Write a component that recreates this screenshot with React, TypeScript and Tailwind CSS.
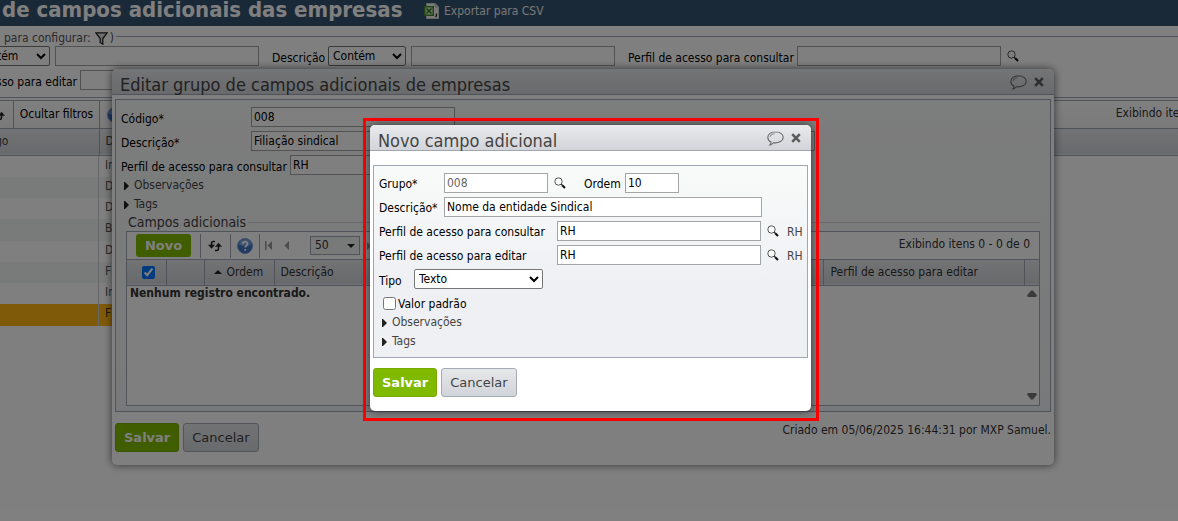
import React from "react";

const FONT = "font-['DejaVu_Sans_Condensed','DejaVu_Sans',sans-serif]";

function SearchIcon() {
  return (
    <svg width="12" height="12" viewBox="0 0 12 12" fill="none" className="shrink-0">
      <circle cx="4.500" cy="4.500" r="3.700" stroke="#555" strokeWidth="1" fill="#fafafa" />
      <path d="M7 7l1.500 1.500" stroke="#333" strokeWidth="1.200" />
      <path d="M8.200 8.200l2.800 2.800" stroke="#111" strokeWidth="2" />
    </svg>
  );
}

function BalloonIcon() {
  return (
    <svg width="17" height="15" viewBox="0 0 17 15" fill="none" stroke="#6b6b6b" strokeWidth="1.100">
      <path d="M8.500.800C4.200.800.800 3.200.800 6.400c0 2 1.200 3.700 3.200 4.700.1 1-.2 1.900-1 2.800 1.600-.3 2.700-1.100 3.500-2.200 5.300.700 9.700-1.900 9.700-5.300C16.200 3.200 12.800.800 8.500.800z" />
      <path d="M3 6C3.400 4 5 2.900 7.500 2.600" stroke="#999" />
    </svg>
  );
}

function CloseIcon() {
  return (
    <svg width="10" height="10" viewBox="0 0 10 10">
      <path d="M1.200 1.200l7.600 7.600M8.800 1.200l-7.600 7.600" stroke="#5c5c5c" strokeWidth="2.600" />
    </svg>
  );
}

function RefreshIcon() {
  return (
    <svg width="14" height="12" viewBox="0 0 14 12" fill="none" stroke="#222" strokeWidth="1.600">
      <path d="M7 1.500H5.500Q3.500 1.500 3.500 3.500V6" />
      <path d="M0 4.800h7L3.500 8.800z" fill="#222" stroke="none" />
      <path d="M7 10.500h1.500q2 0 2-2V6" />
      <path d="M7 6.800h7L10.500 2.800z" fill="#222" stroke="none" />
    </svg>
  );
}

function HelpIcon() {
  return (
    <svg width="16" height="16" viewBox="0 0 16 16">
      <circle cx="8" cy="8" r="7.500" fill="#3f74c6" stroke="#7d9fd6" />
      <path d="M1.800 6.500a6.300 6.300 0 0 1 12.400 0q-6.200 3-12.400 0z" fill="#7ba3e0" />
      <path d="M5.600 6.200C5.600 3 10.500 3 10.500 6c0 1.700-2.300 1.800-2.300 3.600M8.200 10.900v1.900" fill="none" stroke="#fff" strokeWidth="1.800" />
    </svg>
  );
}

function SheetIcon() {
  return (
    <svg width="16" height="16" viewBox="0 0 16 16">
      <path d="M2.500.5h8.500l3.500 3.500v11.500h-12z" fill="#f4f4f4" stroke="#c9d3c4" />
      <path d="M11 .5V4h3.500" fill="#ddd" stroke="#b9c3b4" />
      <rect x="0" y="3" width="10" height="10" fill="#3f8a2c" />
      <rect x="1.500" y="4.500" width="7" height="7" fill="#d9ecd0" />
      <path d="M2.500 5.500l5 5M7.500 5.500l-5 5" stroke="#2f7a1e" strokeWidth="1.600" />
      <path d="M12.500 10.500v2l-1 1.500" stroke="#333" strokeWidth="1.400" fill="none" />
    </svg>
  );
}

function Expander({ text }: { text: string }) {
  return (
    <button type="button" className="flex h-[19px] items-center gap-[5px] pl-[3px] text-[#444]">
      <svg width="5" height="8" viewBox="0 0 5 8">
        <path d="M0 0h1l4 4-4 4H0z" fill="#222" />
      </svg>
      {text}
    </button>
  );
}

function TitleBar({ title }: { title: string }) {
  return (
    <header className="flex h-[26px] items-center justify-between rounded-t-[5px] border-b border-[#a0a7b2] bg-linear-to-b from-[#e9eaec] to-[#d2d4d9] pr-[10px] pl-2">
      <h2 className="pt-[6px] text-[18px] leading-[20px] text-[#444]">{title}</h2>
      <div className="flex items-center gap-[7px] pt-[1px]">
        <button type="button" aria-label="Comentários">
          <BalloonIcon />
        </button>
        <button type="button" aria-label="Fechar">
          <CloseIcon />
        </button>
      </div>
    </header>
  );
}

function Actions() {
  return (
    <div className="flex gap-1 font-['DejaVu_Sans',sans-serif] text-[13px]">
      <button type="button" className="h-[29px] rounded-[3px] border border-[#76aa00] bg-[#80ba00] px-2 font-bold text-white">
        Salvar
      </button>
      <button type="button" className="h-[29px] rounded-[3px] border border-[#a5abb5] bg-linear-to-b from-[#e6e7ea] to-[#d1d4d9] px-2 text-[#444]">
        Cancelar
      </button>
    </div>
  );
}

const INPUT = "h-5 border border-[#a5a5a5] bg-white px-[2px]";
const SELECT = "h-5 rounded-[2px] border border-[#767676] bg-white text-black";
const HEAD = "border-b border-[#a0a7b2] bg-linear-to-b from-[#e6e7ea] to-[#d0d3d8]";

const rows = ["In", "D", "D", "B", "D", "F", "In", "F"];

function BackgroundPage() {
  return (
    <div>
      <header className="flex h-[26px] items-center bg-[#34526e] pl-[2px]">
        <h1 className="w-[422px] pb-[6px] text-[22px] leading-[20px] font-bold whitespace-nowrap text-white">de campos adicionais das empresas</h1>
        <button type="button" className="flex items-center gap-1 pb-1 text-[#eee]">
          <SheetIcon />
          Exportar para CSV
        </button>
      </header>

      <fieldset className="mt-[4px] h-[67px]">
        <div className="flex h-4 items-center pl-1 text-[#555]">
          <span>para configurar:</span>
          <svg width="13" height="13" viewBox="0 0 13 13" className="mr-[2px] ml-1">
            <path d="M.8.800h11.400L7.800 6.500v5.700L5.200 10.500v-4z" fill="#ddd" stroke="#222" strokeWidth="1.300" />
          </svg>
          <span>)</span>
          <span className="mb-[3px] ml-[2px] h-px flex-1 bg-[#a0a7b2]" />
        </div>
        <div className="-ml-[29px] flex h-5 items-center whitespace-nowrap">
          <select aria-label="Operador do código" className={SELECT + " w-[79px]"}>
            <option>Contém</option>
          </select>
          <input aria-label="Código" className={INPUT + " ml-[5px] w-[204px]"} />
          <label htmlFor="f-desc" className="ml-[13px] w-[56px] pt-1">Descrição</label>
          <select aria-label="Operador da descrição" className={SELECT + " w-[78px]"}>
            <option>Contém</option>
          </select>
          <input id="f-desc" className={INPUT + " ml-[5px] w-[204px]"} />
          <label htmlFor="f-cons" className="ml-[13px] w-[169px] pt-1">Perfil de acesso para consultar</label>
          <input id="f-cons" className={INPUT + " mr-[6px] w-[204px]"} />
          <SearchIcon />
        </div>
        <div className="mt-1 flex h-5 items-center whitespace-nowrap">
          <label htmlFor="f-edit" className="-ml-1 w-[84px] pt-[5px]">sso para editar</label>
          <input id="f-edit" className={INPUT + " w-[204px]"} />
        </div>
      </fieldset>

      <section className="border-t border-[#a0a7b2] pt-[2px]">
        <div className="flex h-[29px] items-center justify-between overflow-hidden border-y border-[#a0a7b2] bg-linear-to-b from-white to-[#f4f4f5] whitespace-nowrap">
          <div className="-ml-[9px] flex h-full items-center">
            <RefreshIcon />
            <span className="ml-2 h-full w-px bg-[#a0a7b2]" />
            <button type="button" className="w-[85px] text-center">Ocultar filtros</button>
            <span className="mr-[7px] h-full w-px bg-[#a0a7b2]" />
            <HelpIcon />
          </div>
          <span className="-mr-[69px] pb-[2px] text-[#333]">Exibindo itens 1 - 8 de 8</span>
        </div>
        <table className="w-full table-fixed border-collapse text-left text-[#777]">
          <thead>
            <tr className={"h-[26px] " + HEAD}>
              <th className="w-[99px] border-r border-[#a0a7b2] font-normal text-[#444]">
                <span className="-ml-[5px]">go</span>
              </th>
              <th className="pl-[6px] font-normal text-[#444]">D</th>
            </tr>
          </thead>
        </table>
        <div className="mr-[140px] grid h-[170px] auto-rows-fr text-[#555]">
          {rows.map((r, i) => (
            <div key={i} className={i === 7 ? "flex bg-[#ffb511] text-[#333]" : i % 2 ? "flex bg-[#f2f4f4]" : "flex bg-white"}>
              <span className="w-[99px] border-r border-[#c8ccd2]" />
              <span className="self-center pb-[2px] pl-[6px]">{r}</span>
            </div>
          ))}
        </div>
      </section>
    </div>
  );
}

function GroupDialog() {
  return (
    <section className="absolute top-[69px] right-[124px] left-[112px] rounded-[5px] bg-white pb-[13px] shadow-[0_0_8px_rgba(0,0,0,0.6)]">
      <TitleBar title="Editar grupo de campos adicionais de empresas" />
      <div className="mx-[3px] mt-[4px] border border-[#a0a7b2] bg-linear-to-b from-[#f9fafa] to-[#f1f3f4] px-[5px] pt-[7px] pb-[5px]">
        <div className="flex h-6 items-start">
          <label htmlFor="g-cod" className="w-[130px] pt-[5px]">Código*</label>
          <input id="g-cod" defaultValue="008" className={INPUT + " w-[204px]"} />
        </div>
        <div className="flex h-6 items-start">
          <label htmlFor="g-desc" className="w-[130px] pt-[5px]">Descrição*</label>
          <input id="g-desc" defaultValue="Filiação sindical" className={INPUT + " w-[564px]"} />
        </div>
        <div className="flex h-[21px] items-start">
          <label htmlFor="g-perf" className="w-[169px] pt-[5px]">Perfil de acesso para consultar</label>
          <input id="g-perf" defaultValue="RH" className={INPUT + " w-[204px]"} />
        </div>
        <Expander text="Observações" />
        <Expander text="Tags" />
        <div className="mr-[5px] ml-[5px]">
          <div className="flex h-[17px] items-center gap-[2px] pl-[2px] text-[14px] text-[#444]">
            Campos adicionais
            <span className="h-px flex-1 bg-[#d0d3d8]" />
          </div>
          <div className="border border-[#a0a7b2] bg-white">
            <div className="flex h-[28px] items-center justify-between border-b border-[#a0a7b2] pr-[9px]">
              <div className="flex h-full items-center">
                <button type="button" className="mr-[9px] ml-[9px] h-[23px] w-[55px] rounded-[3px] bg-[#80ba00] font-['DejaVu_Sans',sans-serif] text-[13px] font-bold text-white">
                  Novo
                </button>
                <span className="mr-[7px] h-6 w-px bg-[#a0a7b2]" />
                <RefreshIcon />
                <span className="mr-[6px] ml-2 h-6 w-px bg-[#a0a7b2]" />
                <HelpIcon />
                <span className="mr-[5px] ml-[6px] h-6 w-px bg-[#a0a7b2]" />
                <svg width="26" height="9" viewBox="0 0 26 9" fill="#999">
                  <path d="M0 0h1.500v9H0zM7 0v9L2.500 4.500zM24 0v9l-4.500-4.500z" />
                </svg>
                <span className="relative ml-[19px]">
                  <select aria-label="Itens por página" className="h-[19px] w-[50px] appearance-none border border-[#a0a7b2] bg-[#f1f2f3] pl-1 text-[#333]">
                    <option>50</option>
                  </select>
                  <svg width="8" height="4" viewBox="0 0 8 4" className="pointer-events-none absolute top-2 right-[5px]">
                    <path d="M0 0h8L4 4z" fill="#222" />
                  </svg>
                </span>
                <svg width="5" height="8" viewBox="0 0 5 8" className="ml-[7px]">
                  <path d="M0 0l4 4-4 4z" fill="#999" />
                </svg>
              </div>
              <span className="pb-[2px] text-[#333]">Exibindo itens 0 - 0 de 0</span>
            </div>
            <table className="w-full table-fixed border-collapse text-left text-[#333]">
              <thead>
                <tr className={"h-[25px] " + HEAD}>
                  <th className="w-[39px] border-r border-[#a0a7b2] text-center">
                    <input type="checkbox" aria-label="Selecionar todos" defaultChecked className="mt-1 ml-1 size-[13px] accent-[#0075ff]" />
                  </th>
                  <th className="w-[38px] border-r border-[#a0a7b2]" />
                  <th className="w-[70px] border-r border-[#a0a7b2] font-normal">
                    <span className="flex items-center gap-[5px] pl-[9px]">
                      <svg width="8" height="4" viewBox="0 0 8 4">
                        <path d="M0 4h8L4 0z" fill="#222" />
                      </svg>
                      Ordem
                    </span>
                  </th>
                  <th className="border-r border-[#a0a7b2] pl-[6px] font-normal">Descrição</th>
                  <th className="w-[201px] border-r border-[#a0a7b2] pl-[7px] font-normal">Perfil de acesso para editar</th>
                  <th className="w-[15px]" />
                </tr>
              </thead>
            </table>
            <div className="flex h-[119px] justify-between pl-[3px] text-[#333]">
              <strong>Nenhum registro encontrado.</strong>
              <div className="flex w-[15px] flex-col items-center justify-between pt-1 pb-[5px]">
                <svg width="10" height="7" viewBox="0 0 10 7">
                  <path d="M4 .500h2l4 5-1 1.500H1L0 5.500z" fill="#777" />
                </svg>
                <svg width="10" height="7" viewBox="0 0 10 7">
                  <path d="M4 6.500h2l4-5L9 0H1L0 1.500z" fill="#777" />
                </svg>
              </div>
            </div>
          </div>
        </div>
      </div>
      <div className="mx-[3px] mt-[11px] flex items-start justify-between">
        <Actions />
        <span className="text-[#333]">Criado em 05/06/2025 16:44:31 por MXP Samuel.</span>
      </div>
    </section>
  );
}

function FieldDialog() {
  return (
    <div className="absolute top-[118px] right-[359px] left-[363px] border-[3px] border-[#ff0000] pt-1 pr-[5px] pb-[7px] pl-1">
      <section className="rounded-[5px] bg-white pb-[14px] shadow-[0_0_8px_rgba(0,0,0,0.6)]">
        <TitleBar title="Novo campo adicional" />
        <div className="mx-[3px] mt-[14px] border border-[#a0a7b2] bg-linear-to-b from-[#f9fbfa] to-[#eff0f4] to-60% pt-[7px] pb-[6px] pl-[5px]">
          <div className="flex h-6 items-start">
            <label htmlFor="n-grp" className="w-[65px] pt-1">Grupo*</label>
            <input id="n-grp" defaultValue="008" className={INPUT + " mr-[6px] w-[104px] text-[#666]"} />
            <span className="pt-1">
              <SearchIcon />
            </span>
            <label htmlFor="n-ord" className="ml-[18px] w-[41px] pt-1">Ordem</label>
            <input id="n-ord" defaultValue="10" className={INPUT + " w-[54px]"} />
          </div>
          <div className="flex h-6 items-start">
            <label htmlFor="n-desc" className="w-[65px] pt-1">Descrição*</label>
            <input id="n-desc" defaultValue="Nome da entidade Sindical" className={INPUT + " w-[318px]"} />
          </div>
          {["Perfil de acesso para consultar", "Perfil de acesso para editar"].map((t, i) => (
            <div key={t} className="flex h-6 items-start">
              <label htmlFor={"n-p" + i} className="w-[178px] pt-1">{t}</label>
              <input id={"n-p" + i} defaultValue="RH" className={INPUT + " mr-[6px] w-[204px]"} />
              <span className="pt-1">
                <SearchIcon />
              </span>
              <span className="ml-2 pt-1 text-[#444]">RH</span>
            </div>
          ))}
          <div className="flex h-[25px] items-start">
            <label htmlFor="n-tipo" className="w-[35px] pt-[5px]">Tipo</label>
            <select id="n-tipo" className={SELECT + " w-[129px]"}>
              <option>Texto</option>
            </select>
          </div>
          <div className="flex h-[19px] items-center gap-[2px] pl-1">
            <input id="n-val" type="checkbox" className="size-[13px]" />
            <label htmlFor="n-val" className="pt-[2px]">Valor padrão</label>
          </div>
          <Expander text="Observações" />
          <Expander text="Tags" />
        </div>
        <div className="mx-[3px] mt-[10px]">
          <Actions />
        </div>
      </section>
    </div>
  );
}

export default function App() {
  return (
    <main className={"relative min-h-screen overflow-hidden bg-white text-[12px] leading-[15px] text-black " + FONT}>
      <BackgroundPage />
      <GroupDialog />
      <div className="absolute inset-0 bg-black/50" />
      <FieldDialog />
    </main>
  );
}
